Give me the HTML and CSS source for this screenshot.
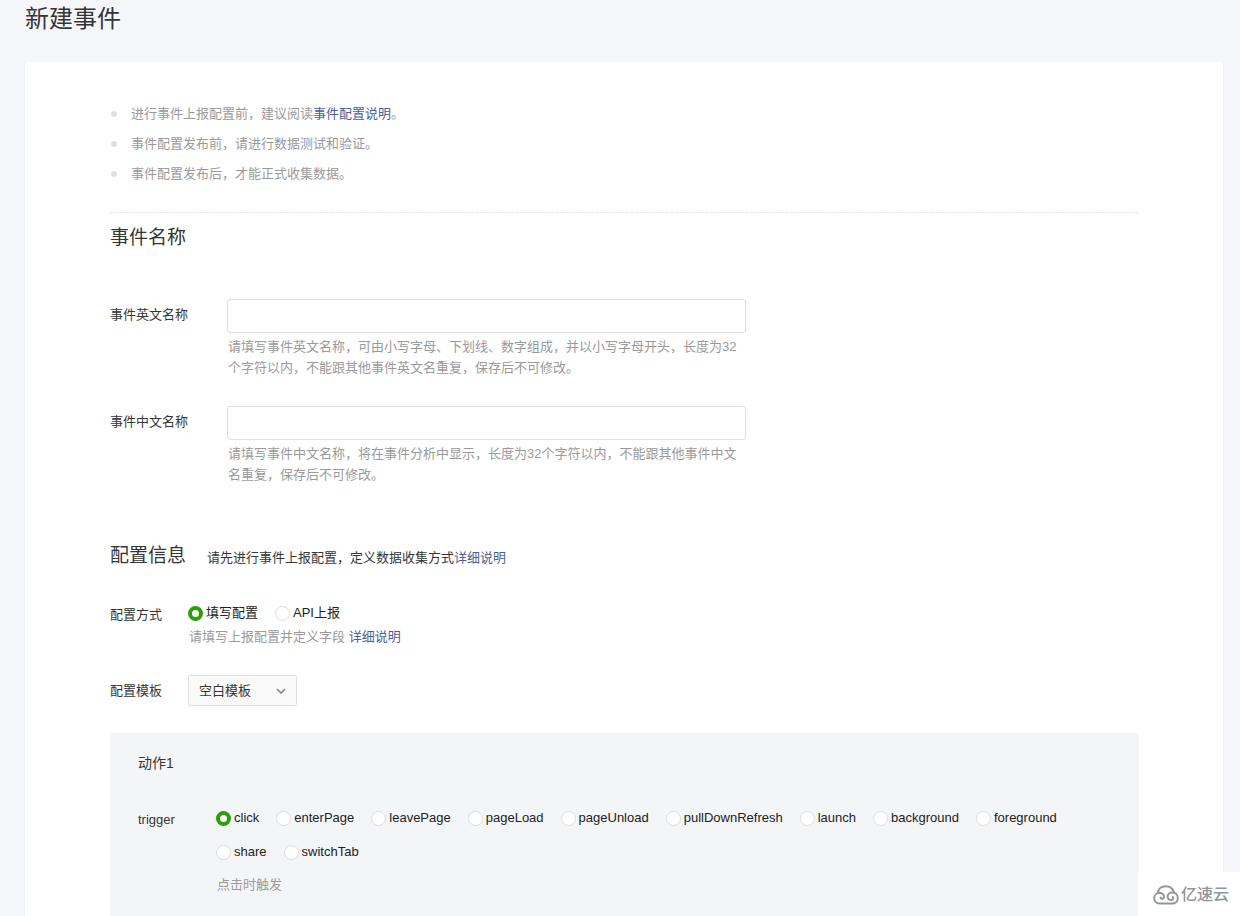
FILE: index.html
```html
<!DOCTYPE html>
<html lang="zh-CN">
<head>
<meta charset="utf-8">
<meta name="viewport" content="width=device-width, initial-scale=1">
<title>新建事件</title>
<link rel="stylesheet" href="styles.css">
</head>
<body>
<div class="page">
  <h1 class="page-title">新建事件</h1>
  <main class="card">
    <ul class="tips">
      <li class="tip">进行事件上报配置前，建议阅读<a class="link" href="#">事件配置说明</a>。</li>
      <li class="tip">事件配置发布前，请进行数据测试和验证。</li>
      <li class="tip">事件配置发布后，才能正式收集数据。</li>
    </ul>

    <form class="form">
      <h2 class="section-title">事件名称</h2>
      <div class="names">
        <div class="name-row">
          <label class="name-label" for="en-name">事件英文名称</label>
          <div class="name-field">
            <input class="text-input" id="en-name" type="text">
            <p class="help">请填写事件英文名称，可由小写字母、下划线、数字组成，并以小写字母开头，长度为32个字符以内，不能跟其他事件英文名重复，保存后不可修改。</p>
          </div>
        </div>
        <div class="name-row">
          <label class="name-label" for="zh-name">事件中文名称</label>
          <div class="name-field">
            <input class="text-input" id="zh-name" type="text">
            <p class="help">请填写事件中文名称，将在事件分析中显示，长度为32个字符以内，不能跟其他事件中文名重复，保存后不可修改。</p>
          </div>
        </div>
      </div>

      <div class="section-head">
        <h2 class="section-title">配置信息</h2>
        <p class="section-note">请先进行事件上报配置，定义数据收集方式<a class="link" href="#">详细说明</a></p>
      </div>

      <div class="config-row" role="radiogroup" aria-labelledby="mode-label">
        <span class="config-label" id="mode-label">配置方式</span>
        <div class="config-field">
          <div class="radios">
            <label class="radio"><input class="radio-input" type="radio" name="mode" checked>填写配置</label>
            <label class="radio"><input class="radio-input" type="radio" name="mode">API上报</label>
          </div>
          <p class="mode-help">请填写上报配置并定义字段 <a class="link" href="#">详细说明</a></p>
        </div>
      </div>

      <div class="template-row">
        <label class="template-label" for="template">配置模板</label>
        <div class="select-wrap">
          <select class="select" id="template"><option>空白模板</option></select>
          <svg class="chevron" viewBox="0 0 10 6" aria-hidden="true"><path d="M1 1l4 4 4-4"/></svg>
        </div>
      </div>

      <section class="action">
        <h3 class="action-title">动作1</h3>
        <div class="action-row" role="radiogroup" aria-labelledby="trigger-label">
          <span class="trigger-label" id="trigger-label">trigger</span>
          <div class="trigger-field">
            <div class="radios">
              <label class="radio"><input class="radio-input" type="radio" name="trigger" checked>click</label>
              <label class="radio"><input class="radio-input" type="radio" name="trigger">enterPage</label>
              <label class="radio"><input class="radio-input" type="radio" name="trigger">leavePage</label>
              <label class="radio"><input class="radio-input" type="radio" name="trigger">pageLoad</label>
              <label class="radio"><input class="radio-input" type="radio" name="trigger">pageUnload</label>
              <label class="radio"><input class="radio-input" type="radio" name="trigger">pullDownRefresh</label>
              <label class="radio"><input class="radio-input" type="radio" name="trigger">launch</label>
              <label class="radio"><input class="radio-input" type="radio" name="trigger">background</label>
              <label class="radio"><input class="radio-input" type="radio" name="trigger">foreground</label>
              <label class="radio"><input class="radio-input" type="radio" name="trigger">share</label>
              <label class="radio"><input class="radio-input" type="radio" name="trigger">switchTab</label>
            </div>
            <p class="trigger-help">点击时触发</p>
          </div>
        </div>
      </section>
    </form>
  </main>
</div>
<div class="watermark">
  <svg class="cloud" viewBox="0 0 26 20" aria-hidden="true">
    <path d="M4.600 8.200C5.200 4 8.500 1.200 12.800 1.200C16.600 1.200 19.500 3.200 20.800 6.800"/>
    <path d="M7.600 12.600C7.600 13.800 9.300 14.200 10.400 13.200C12 11.500 10.200 7.800 6.800 7.800C3.600 7.800 1.200 10.200 1.200 13.200C1.200 16.300 3.600 18.600 6.800 18.600H19.200C22.400 18.600 24.800 16.200 24.800 13C24.800 9.800 22.400 7.400 19.200 7.400C16.400 7.400 14.600 9.300 14.600 11.600C14.600 13.700 16.200 15.200 18.200 15C20 14.800 20.800 13 19.800 11.900"/>
  </svg>
  <span class="brand">亿速云</span>
</div>
</body>
</html>
```

FILE: styles.css
```css
* {
  box-sizing: border-box;
}

body {
  margin: 0;
  background: #f5f6fa;
  color: #353535;
  font: 13px/20px "Liberation Sans", "Noto Sans CJK SC", sans-serif;
}

h1, h2, h3, p, ul {
  margin: 0;
  padding: 0;
  font-weight: 400;
}

.link {
  color: #4c5f94;
  text-decoration: none;
}

.page {
  display: flex;
  flex-direction: column;
  min-height: 100vh;
  padding: 0 17px 0 25px;
}

.page-title {
  margin-bottom: 24px;
  font-size: 24px;
  line-height: 38px;
}

.card {
  flex: 1;
  display: flex;
  flex-direction: column;
  padding: 37px 84px 0 85px;
  background: #fff;
  border-radius: 3px 3px 0 0;
  box-shadow: 0 1px 2px #dcdde2;
}

.tips {
  padding-bottom: 23px;
  border-bottom: 1px dashed #e4e4e6;
  color: #9a9a9a;
  line-height: 30px;
  list-style: none;
}

.tip {
  display: flex;
  align-items: center;
}

.tip::before {
  content: "";
  width: 6px;
  height: 6px;
  margin: 0 14px 0 1px;
  border-radius: 50%;
  background: #e0e0e0;
}

.form {
  flex: 1;
  display: flex;
  flex-direction: column;
}

.section-title {
  font-size: 19px;
  line-height: 28px;
}

.form > .section-title {
  margin: 11px 0 47px;
}

.names {
  display: flex;
  flex-direction: column;
  gap: 28px;
}

.name-row {
  display: flex;
}

.name-label {
  width: 117px;
  padding-top: 6px;
}

.name-field {
  flex: 0 1 519px;
}

.text-input {
  display: block;
  width: 100%;
  height: 34px;
  padding: 0 10px;
  border: 1px solid #e0e0e2;
  border-radius: 3px;
  background: #fff;
  font: inherit;
}

.help {
  padding: 3px 4px 0 1px;
  color: #9a9a9a;
  line-height: 21px;
}

.section-head {
  display: flex;
  align-items: baseline;
  gap: 21px;
  margin: 57px 0 33px;
}

.config-row,
.template-row,
.action-row {
  display: flex;
}

.config-label,
.template-label,
.trigger-label {
  flex: none;
  width: 78px;
}

.config-label {
  padding-top: 2px;
}

.radios {
  display: flex;
  flex-wrap: wrap;
  gap: 14px 17px;
}

.radio {
  display: flex;
  align-items: center;
  gap: 3px;
  color: #222;
}

.radio-input {
  appearance: none;
  width: 15px;
  height: 15px;
  margin: 0;
  border: 1px solid #dcdcde;
  border-radius: 50%;
  background: #fff;
}

.radio-input:checked {
  border: 4px solid #2b9f0d;
}

.mode-help {
  padding: 4px 0 0 1px;
  color: #9a9a9a;
}

.template-row {
  align-items: center;
  margin: 28px 0 27px;
}

.select-wrap {
  position: relative;
}

.select {
  appearance: none;
  display: block;
  width: 109px;
  height: 31px;
  padding: 0 28px 0 10px;
  border: 1px solid #e0e0e2;
  border-radius: 2px;
  background: #fafafa;
  color: #353535;
  font: inherit;
}

.chevron {
  position: absolute;
  top: 13px;
  right: 11px;
  width: 10px;
  height: 6px;
  fill: none;
  stroke: #808080;
  stroke-width: 1.5;
  pointer-events: none;
}

.action {
  flex: 1;
  padding: 20px 28px 16px;
  background: #f4f5f7;
}

.action-title {
  margin-bottom: 35px;
  font-size: 14px;
  line-height: 20px;
}

.trigger-label {
  padding-top: 2px;
}

.trigger-help {
  padding: 13px 0 0 1px;
  color: #9a9a9a;
}

.watermark {
  position: fixed;
  right: 0;
  bottom: 0;
  display: flex;
  align-items: center;
  gap: 2px;
  height: 44px;
  padding: 2px 11px 0 15px;
  background: #fff;
  color: #91969c;
}

.cloud {
  width: 26px;
  height: 20px;
  fill: none;
  stroke: currentColor;
  stroke-width: 2;
  stroke-linecap: round;
}

.brand {
  font-size: 16px;
  font-weight: 500;
}
```
